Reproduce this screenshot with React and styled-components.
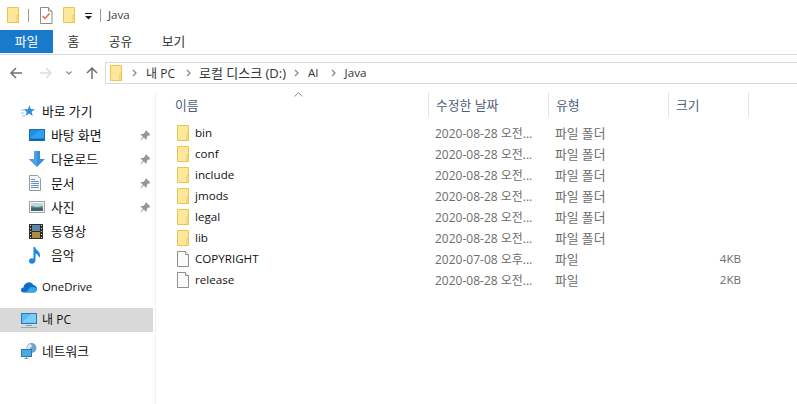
import React from "react";
import styled, { createGlobalStyle } from "styled-components";

const Global = createGlobalStyle`
  html, body { margin: 0; padding: 0; background: #fff; }
  body { width: 797px; height: 404px; overflow: hidden; font-family: "Open Sans", "Noto Sans CJK KR", sans-serif; font-size: 12px; color: #1a1a1a; }
`;
const Win = styled.div`width:797px;height:404px;display:flex;flex-direction:column;overflow:hidden;`;
const TitleBar = styled.div`height:30px;display:flex;align-items:center;padding-left:7px;box-sizing:border-box;`;
const TitleSep = styled.span`width:1px;height:13px;background:#9a9a9a;margin:0 ${p=>p.$r}px 0 ${p=>p.$l}px;`;
const TitleGap = styled.span`width:10px;flex:none;`;
const DropMark = styled.svg`display:block;flex:none;margin:2px 0 0 8px;`;
const TitleText = styled.span`color:#444;font-size:11.6px;margin-bottom:1px;`;
const Ribbon = styled.div`height:25px;display:flex;border-bottom:1px solid #dadada;box-sizing:border-box;`;
const Tab = styled.div`
  width:${p=>p.$w}px;height:23px;padding-bottom:2px;box-sizing:border-box;display:flex;align-items:center;justify-content:center;
  background:${p=>p.$active?"#1979ca":"transparent"};color:${p=>p.$active?"#fff":"#333"};font-size:12.8px;
`;
const NavBar = styled.div`height:37px;display:flex;align-items:flex-start;padding-top:7px;box-sizing:border-box;`;
const NavBtns = styled.div`width:105px;height:22px;flex:none;display:flex;align-items:center;padding-left:10px;box-sizing:border-box;`;
const NavBtn = styled.svg`display:block;flex:none;margin-right:${p=>p.$mr||0}px;`;
const Address = styled.div`flex:1;height:22px;box-sizing:border-box;border:1px solid #d9d9d9;border-right:none;display:flex;align-items:center;padding-left:4px;color:#333;`;
const Crumb = styled.span`margin-right:${p=>p.$mr}px;margin-bottom:1px;font-size:${p=>p.$size||12}px;white-space:nowrap;`;
const CrumbSep = styled.svg`display:block;flex:none;margin:0 ${p=>p.$r}px 0 ${p=>p.$l}px;`;
const Body = styled.div`flex:1;display:flex;min-height:0;`;
const Sidebar = styled.nav`width:156px;flex:none;box-sizing:border-box;border-right:1px solid #f0f0f0;padding-top:7px;`;
const SideRow = styled.div`
  height:24px;width:153px;display:flex;align-items:center;box-sizing:border-box;position:relative;
  padding-left:${p=>p.$indent?29:21}px;margin-top:${p=>p.$mt||0}px;
  background:${p=>p.$sel?"#d9d9d9":"transparent"};color:#111;
`;
const SideIcon = styled.span`width:${p=>p.$indent?22:21}px;flex:none;display:flex;align-items:center;`;
const SideLabel = styled.span`white-space:nowrap;font-size:${p=>p.$size||12.8}px;margin-bottom:2px;`;
const Pin = styled.svg`position:absolute;left:140px;top:7px;`;
const Main = styled.main`flex:1;min-width:0;`;
const Head = styled.div`display:flex;height:25px;position:relative;`;
const HeadCell = styled.div`
  width:${p=>p.$w}px;box-sizing:border-box;padding-left:${p=>p.$pl}px;display:flex;align-items:center;
  border-right:1px solid #e5e5e5;color:#4c607a;font-size:12.8px;
`;
const SortMark = styled.svg`position:absolute;left:138px;top:0;`;
const List = styled.div`padding-top:5px;`;
const Row = styled.div`height:21px;display:flex;align-items:center;`;
const NameCell = styled.div`width:273px;display:flex;align-items:center;padding-left:21px;box-sizing:border-box;color:#111;font-size:11.6px;`;
const IconSlot = styled.span`width:18px;display:flex;flex:none;`;
const DateCell = styled.div`width:120px;padding-left:6px;box-sizing:border-box;color:#6d6d6d;white-space:nowrap;`;
const TypeCell = styled.div`width:120px;padding-left:6px;box-sizing:border-box;color:#6d6d6d;white-space:nowrap;font-size:12.8px;`;
const SizeCell = styled.div`width:72px;text-align:right;color:#6d6d6d;font-size:11.6px;`;
const Glyph = styled.svg`display:block;flex:none;`;

const Folder = () => (
  <Glyph width="13" height="16" viewBox="0 0 13 16">
    <path d="M.5.5h11v15H.5z" fill="#fee79b" stroke="#e9c64f" />
    <path d="M10 8.500h1.500v7H10z" fill="#fff3c8" stroke="#e9c64f" />
  </Glyph>
);
const FileIcon = () => (
  <Glyph width="13" height="16" viewBox="0 0 13 16">
    <path d="M.5.5h8l3 3v12H.5z" fill="#fbfbfb" stroke="#8f8f8f" />
    <path d="M8.500.5v3h3" fill="#fff" stroke="#8f8f8f" />
  </Glyph>
);
const Check = () => (
  <Glyph width="13" height="17" viewBox="0 0 13 17">
    <path d="M.5.5h8l3.500 3.500v12.500H.5z" fill="#fff" stroke="#8a8a8a" />
    <path d="M8.500.5v3.500H12" fill="#eee" stroke="#8a8a8a" />
    <path d="M2.500 9l2.500 2.500L9.500 6.500" fill="none" stroke="#e2643a" strokeWidth="1.400" />
  </Glyph>
);
const Star = () => (
  <Glyph width="14" height="13" viewBox="0 0 14 13">
    <path d="M8.500 0l1.200 4 4.300.2-3.400 2.500 1.200 4.300-3.600-2.500L4.500 11l1.300-4.100L2.500 4.300l4.500-.1z" fill="#2f8fdc" />
    <path d="M0 5h3M0 8h3M1 11h3" stroke="#8fc4ee" />
  </Glyph>
);
const Desktop = () => (
  <Glyph width="16" height="12" viewBox="0 0 16 12">
    <rect x=".5" y=".5" width="15" height="11" fill="#1f8fe6" stroke="#1a6db5" />
    <path d="M1 10.500h14" stroke="#0c5fa8" />
    <path d="M1 9L11 1h4v8z" fill="#2da2f0" />
  </Glyph>
);
const Download = () => (
  <Glyph width="16" height="16" viewBox="0 0 16 16">
    <path d="M5 0h6v8h5l-8 8-8-8h5z" fill="#3a8fdc" />
    <path d="M5 0h3v16L0 8h5z" fill="#4f9fe6" />
  </Glyph>
);
const DocIcon = () => (
  <Glyph width="12" height="16" viewBox="0 0 12 16">
    <path d="M.5.5h8l3 3v12H.5z" fill="#f7f7f7" stroke="#9a9a9a" />
    <path d="M2 4.500h4M2 6.500h8M2 8.500h8M2 10.500h8M2 12.500h8" stroke="#5f98c8" />
  </Glyph>
);
const Photo = () => (
  <Glyph width="16" height="12" viewBox="0 0 16 12">
    <rect x=".5" y=".5" width="15" height="11" fill="#f5f5f5" stroke="#a3a3a3" />
    <rect x="2" y="2" width="12" height="4" fill="#b9d6ea" />
    <path d="M2 5l6 1 6-1v5H2z" fill="#5f8a78" />
    <rect x="2" y="7" width="12" height="3" fill="#3d6a6a" />
  </Glyph>
);
const Film = () => (
  <Glyph width="14" height="15" viewBox="0 0 14 15">
    <rect width="14" height="15" fill="#2c2c2c" />
    <rect x="3" y="1" width="8" height="6" fill="#5d87a8" />
    <rect x="3" y="8" width="8" height="6" fill="#b18a3a" />
    <path d="M1 1.500h1M1 4.500h1M1 7.500h1M1 10.500h1M1 13.500h1M12 1.500h1M12 4.500h1M12 7.500h1M12 10.500h1M12 13.500h1" stroke="#ddd" />
  </Glyph>
);
const Music = () => (
  <Glyph width="12" height="17" viewBox="0 0 12 17">
    <ellipse cx="3" cy="14" rx="3" ry="2.700" fill="#1c86e0" />
    <path d="M4.500 0H6c.5 3 5 4 5 8 0 1.500-.5 2.500-1 3 .2-2.500-2-4-3.500-4.500V14h-2z" fill="#1c86e0" />
  </Glyph>
);
const Cloud = () => (
  <Glyph width="16" height="11" viewBox="0 0 16 11">
    <path d="M2.500 10.500C.8 10.500 0 9.300 0 8c0-1.300 1-2.500 2.400-2.500C3 2.500 5.200.3 8 .3c2 0 3.500 1 4.300 2.700C14.500 3.300 16 5 16 7c0 2-1.500 3.500-3 3.500z" fill="#0f6fc6" />
    <path d="M5 10.500l4-5c2-1 6-.5 7 2 0 1.500-1.500 3-3 3z" fill="#37a6ea" />
  </Glyph>
);
const PC = () => (
  <Glyph width="16" height="15" viewBox="0 0 16 15">
    <rect x=".5" y=".5" width="15" height="10" fill="#55bdf7" stroke="#2d79b0" />
    <path d="M1 9.500L10 1h5v8.500z" fill="#7ccdfb" />
    <path d="M5 12.500h6" stroke="#8a9aa8" />
    <path d="M0 14.500h16" stroke="#98a6b3" />
  </Glyph>
);
const Net = () => (
  <Glyph width="16" height="16" viewBox="0 0 16 16">
    <circle cx="10.500" cy="5" r="5" fill="#6fa4cf" />
    <path d="M8 1c2 0 3 1 3 2s-2 1-2 3-2 1-3 0c0-3 1-4 2-5z" fill="#d8e6ef" />
    <rect x=".5" y="6.500" width="10" height="7" fill="#4da8e6" stroke="#2d79b0" />
    <path d="M3.500 15.500h4M5.500 14v1.500" stroke="#8a9aa8" />
  </Glyph>
);
const Sep = ({ l = 0, r = 8 }) => (
  <CrumbSep $l={l} $r={r} width="5" height="8" viewBox="0 0 5 8">
    <path d="M1 1l3 3-3 3" fill="none" stroke="#8a8a8a" strokeWidth="1.300" />
  </CrumbSep>
);

const folders = ["bin", "conf", "include", "jmods", "legal", "lib"];
const side = [
  { label:"바로 가기", icon:<Star/> },
  { label:"바탕 화면", icon:<Desktop/>, indent:true, pin:true },
  { label:"다운로드", icon:<Download/>, indent:true, pin:true },
  { label:"문서", icon:<DocIcon/>, indent:true, pin:true },
  { label:"사진", icon:<Photo/>, indent:true, pin:true },
  { label:"동영상", icon:<Film/>, indent:true },
  { label:"음악", icon:<Music/>, indent:true },
  { label:"OneDrive", icon:<Cloud/>, mt:8, size:11.4 },
  { label:"내 PC", icon:<PC/>, mt:9, sel:true, size:12 },
  { label:"네트워크", icon:<Net/>, mt:7 },
];

export default function App() {
  return (
    <Win>
      <Global />
      <TitleBar>
        <Folder />
        <TitleSep $l={8} $r={11} />
        <Check />
        <TitleGap />
        <Folder />
        <DropMark width="9" height="7" viewBox="0 0 9 7">
          <path d="M1 .5h7" stroke="#222" />
          <path d="M1 3h7L4.500 6.500z" fill="#222" />
        </DropMark>
        <TitleSep $l={7} $r={7} />
        <TitleText>Java</TitleText>
      </TitleBar>
      <Ribbon>
        <Tab $active $w={53}>파일</Tab>
        <Tab $w={41}>홈</Tab>
        <Tab $w={53}>공유</Tab>
        <Tab $w={53}>보기</Tab>
      </Ribbon>
      <NavBar>
        <NavBtns>
          <NavBtn $mr={18} width="12" height="12" viewBox="0 0 12 12">
            <path d="M12 6H1.500M6 1L1 6l5 5" fill="none" stroke="#6f6f6f" strokeWidth="1.500" />
          </NavBtn>
          <NavBtn $mr={14} width="12" height="12" viewBox="0 0 12 12">
            <path d="M0 6h10.500M6 1l5 5-5 5" fill="none" stroke="#dcdcdc" strokeWidth="1.500" />
          </NavBtn>
          <NavBtn $mr={14} width="6" height="4" viewBox="0 0 6 4">
            <path d="M.5.500L3 3 5.500.5" fill="none" stroke="#8a8a8a" strokeWidth="1.200" />
          </NavBtn>
          <NavBtn width="12" height="12" viewBox="0 0 12 12">
            <path d="M6 12V1.500M1 6l5-5 5 5" fill="none" stroke="#6f6f6f" strokeWidth="1.500" />
          </NavBtn>
        </NavBtns>
        <Address>
          <Folder />
          <Sep l={9} r={9} />
          <Crumb $mr={11}>내 PC</Crumb>
          <Sep />
          <Crumb $mr={8} $size={13}>로컬 디스크 (D:)</Crumb>
          <Sep r={9} />
          <Crumb $mr={12} $size={11.6}>AI</Crumb>
          <Sep r={9} />
          <Crumb $mr={0} $size={11.6}>Java</Crumb>
        </Address>
      </NavBar>
      <Body>
        <Sidebar>
          {side.map(s => (
            <SideRow key={s.label} $indent={s.indent} $mt={s.mt} $sel={s.sel}>
              <SideIcon $indent={s.indent}>{s.icon}</SideIcon>
              <SideLabel $size={s.size}>{s.label}</SideLabel>
              {s.pin && (
                <Pin width="11" height="11" viewBox="0 0 11 11">
                  <path d="M6.300.6l4.100 4.100-1 .7-.8-.2-2 2 .2 2-.8.6-2.300-2.400L.8 10.300l-.4-.3 2.500-3.200L.6 4.500l.7-.8 2 .2 2-2-.1-.9z" fill="#8f969c" />
                </Pin>
              )}
            </SideRow>
          ))}
        </Sidebar>
        <Main>
          <Head>
            <SortMark width="9" height="5" viewBox="0 0 9 5">
              <path d="M.5 4.500L4.500.8l4 3.700" fill="none" stroke="#8a8a8a" />
            </SortMark>
            <HeadCell $w={273} $pl={19}>이름</HeadCell>
            <HeadCell $w={120} $pl={7}>수정한 날짜</HeadCell>
            <HeadCell $w={120} $pl={7}>유형</HeadCell>
            <HeadCell $w={80} $pl={7}>크기</HeadCell>
          </Head>
          <List>
            {folders.map(n => (
              <Row key={n}>
                <NameCell><IconSlot><Folder /></IconSlot>{n}</NameCell>
                <DateCell>2020-08-28 오전...</DateCell>
                <TypeCell>파일 폴더</TypeCell>
              </Row>
            ))}
            <Row>
              <NameCell><IconSlot><FileIcon /></IconSlot>COPYRIGHT</NameCell>
              <DateCell>2020-07-08 오후...</DateCell>
              <TypeCell>파일</TypeCell>
              <SizeCell>4KB</SizeCell>
            </Row>
            <Row>
              <NameCell><IconSlot><FileIcon /></IconSlot>release</NameCell>
              <DateCell>2020-08-28 오전...</DateCell>
              <TypeCell>파일</TypeCell>
              <SizeCell>2KB</SizeCell>
            </Row>
          </List>
        </Main>
      </Body>
    </Win>
  );
}
